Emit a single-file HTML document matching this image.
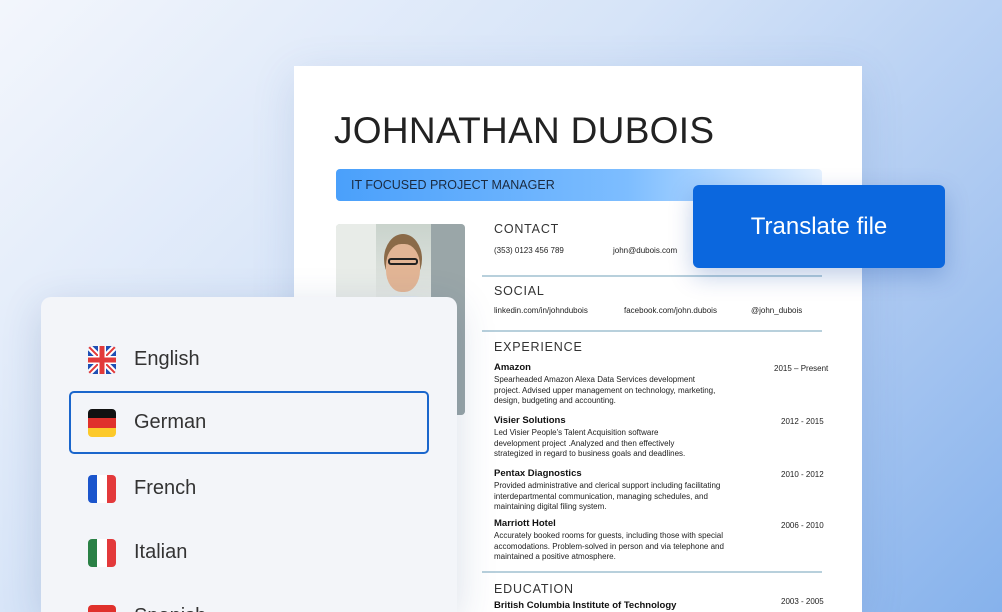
<!DOCTYPE html>
<html><head><meta charset="utf-8"><style>
*{margin:0;padding:0;box-sizing:border-box}
html,body{width:1002px;height:612px;overflow:hidden}
body{position:relative;font-family:"Liberation Sans",sans-serif;
background:linear-gradient(135deg,#f3f6fc 0%,#d6e4f8 40%,#a9c7f1 75%,#86b2ec 100%)}
.card{position:absolute;left:294px;top:66px;width:568px;height:546px;overflow:hidden;background:#fff;box-shadow:0 10px 40px rgba(60,100,170,.15)}
.abs{position:absolute}
.name{left:40px;top:44px;font-size:37px;color:#222;letter-spacing:.3px;font-weight:300}
.banner{left:42px;top:103px;width:486px;height:32px;border-radius:4px;background:linear-gradient(90deg,#4aa0fb,#7dbdff 60%,#e6f2ff);font-size:12.5px;color:#1a2a40;padding:9px 0 0 15px}
.photo{left:42px;top:158px;width:129px;height:191px;border-radius:4px;overflow:hidden;background:linear-gradient(180deg,#c9d3cc 0%,#e5e8e4 40%,#b8bfc6 100%)}
.h{font-size:12.5px;color:#333;letter-spacing:.8px}
.s{font-size:8px;color:#222}
.b{font-size:9.5px;font-weight:bold;color:#111}
.line{left:188px;width:340px;height:2px;background:#b8d0dc}
.btn{position:absolute;left:693px;top:185px;width:252px;height:83px;background:#0b67de;border-radius:6px;color:#fff;font-size:24px;text-align:center;line-height:83px;box-shadow:0 8px 24px rgba(0,60,160,.25)}
.panel{position:absolute;left:41px;top:297px;width:416px;height:315px;overflow:hidden;background:#f3f5f9;border-radius:10px 10px 0 0;box-shadow:0 10px 40px rgba(40,70,130,.18)}
.row{position:absolute;left:28px;width:360px;height:64px}
.row span{position:absolute;left:65px;top:20px;font-size:20px;color:#333}
.flag{position:absolute;left:19px;top:18px;width:28px;height:28px;border-radius:4px;overflow:hidden}
.sel{border:2px solid #1a66cc;border-radius:5px}
</style></head><body>
<div class="card">
 <div class="abs name">JOHNATHAN DUBOIS</div>
 <div class="abs banner">IT FOCUSED PROJECT MANAGER</div>
 <div class="abs photo">
  <div class="abs" style="left:0;top:0;width:40px;height:191px;background:#e8ece8"></div>
  <div class="abs" style="left:95px;top:0;width:34px;height:191px;background:#9aa6a8"></div>
  <div class="abs" style="left:48px;top:10px;width:38px;height:50px;border-radius:50%;background:#8a6a48"></div>
  <div class="abs" style="left:50px;top:20px;width:34px;height:48px;border-radius:45%;background:#e2b595"></div>
  <div class="abs" style="left:52px;top:34px;width:30px;height:7px;border:2px solid #222;border-radius:3px"></div>
  <div class="abs" style="left:30px;top:72px;width:76px;height:130px;border-radius:30px 30px 0 0;background:#dfe6ee"></div>
 </div>
 <div class="abs h" style="left:200px;top:156px">CONTACT</div>
 <div class="abs s" style="left:200px;top:180px">(353) 0123 456 789</div>
 <div class="abs s" style="left:319px;top:180px">john@dubois.com</div>
 <div class="abs line" style="top:209px"></div>
 <div class="abs h" style="left:200px;top:218px">SOCIAL</div>
 <div class="abs s" style="left:200px;top:240px">linkedin.com/in/johndubois</div>
 <div class="abs s" style="left:330px;top:240px">facebook.com/john.dubois</div>
 <div class="abs s" style="left:457px;top:240px">@john_dubois</div>
 <div class="abs line" style="top:264px"></div>
 <div class="abs h" style="left:200px;top:274px">EXPERIENCE</div>
 <div class="abs b" style="left:200px;top:296px">Amazon</div>
 <div class="abs s" style="left:480px;top:298px">2015 – Present</div>
 <div class="abs s" style="left:200px;top:309px;line-height:10.6px;width:222px">Spearheaded Amazon Alexa Data Services development project. Advised upper management on technology, marketing, design, budgeting and accounting.</div>
 <div class="abs b" style="left:200px;top:349px">Visier Solutions</div>
 <div class="abs s" style="left:487px;top:351px">2012 - 2015</div>
 <div class="abs s" style="left:200px;top:362px;line-height:10.6px;width:210px">Led Visier People's Talent Acquisition software development project .Analyzed and then effectively strategized in regard to business goals and deadlines.</div>
 <div class="abs b" style="left:200px;top:402px">Pentax Diagnostics</div>
 <div class="abs s" style="left:200px;top:415px;line-height:10.6px;width:232px">Provided administrative and clerical support including facilitating interdepartmental communication, managing schedules, and maintaining digital filing system.</div>
 <div class="abs s" style="left:487px;top:404px">2010 - 2012</div>
 <div class="abs b" style="left:200px;top:452px">Marriott Hotel</div>
 <div class="abs s" style="left:487px;top:455px">2006 - 2010</div>
 <div class="abs s" style="left:200px;top:465px;line-height:10.6px;width:232px">Accurately booked rooms for guests, including those with special accomodations. Problem-solved in person and via telephone and maintained a positive atmosphere.</div>
 <div class="abs line" style="top:505px"></div>
 <div class="abs h" style="left:200px;top:516px">EDUCATION</div>
 <div class="abs b" style="left:200px;top:534px">British Columbia Institute of Technology</div>
 <div class="abs s" style="left:487px;top:531px">2003 - 2005</div>
</div>
<div class="btn">Translate file</div>
<div class="panel">
 <div class="row" style="top:31px"><div class="flag"><svg width="28" height="28" viewBox="0 0 28 28"><rect width="28" height="28" fill="#1f4fb4"/><path d="M0 0L28 28M28 0L0 28" stroke="#fff" stroke-width="6"/><path d="M0 0L28 28M28 0L0 28" stroke="#e23a3a" stroke-width="2"/><path d="M14 0V28M0 14H28" stroke="#fff" stroke-width="8"/><path d="M14 0V28M0 14H28" stroke="#e23a3a" stroke-width="5"/></svg></div><span>English</span></div>
 <div class="row sel" style="top:94px;height:63px"><div class="flag" style="left:17px;top:16px"><div style="height:9.3px;background:#111"></div><div style="height:9.3px;background:#e0312c"></div><div style="height:9.4px;background:#fcc92a"></div></div><span style="left:63px;top:18px">German</span></div>
 <div class="row" style="top:160px"><div class="flag" style="display:flex"><div style="flex:1;background:#1b55cc"></div><div style="flex:1;background:#fff"></div><div style="flex:1;background:#e3393b"></div></div><span>French</span></div>
 <div class="row" style="top:224px"><div class="flag" style="display:flex"><div style="flex:1;background:#2a8146"></div><div style="flex:1;background:#fff"></div><div style="flex:1;background:#e3393b"></div></div><span>Italian</span></div>
 <div class="row" style="top:250px;height:65px;overflow:hidden"><div class="flag" style="top:58px"><div style="height:7px;background:#e0312c"></div><div style="height:14px;background:#fcc92a"></div><div style="height:7px;background:#e0312c"></div></div><span style="top:58px">Spanish</span></div>
</div>
</body></html>
